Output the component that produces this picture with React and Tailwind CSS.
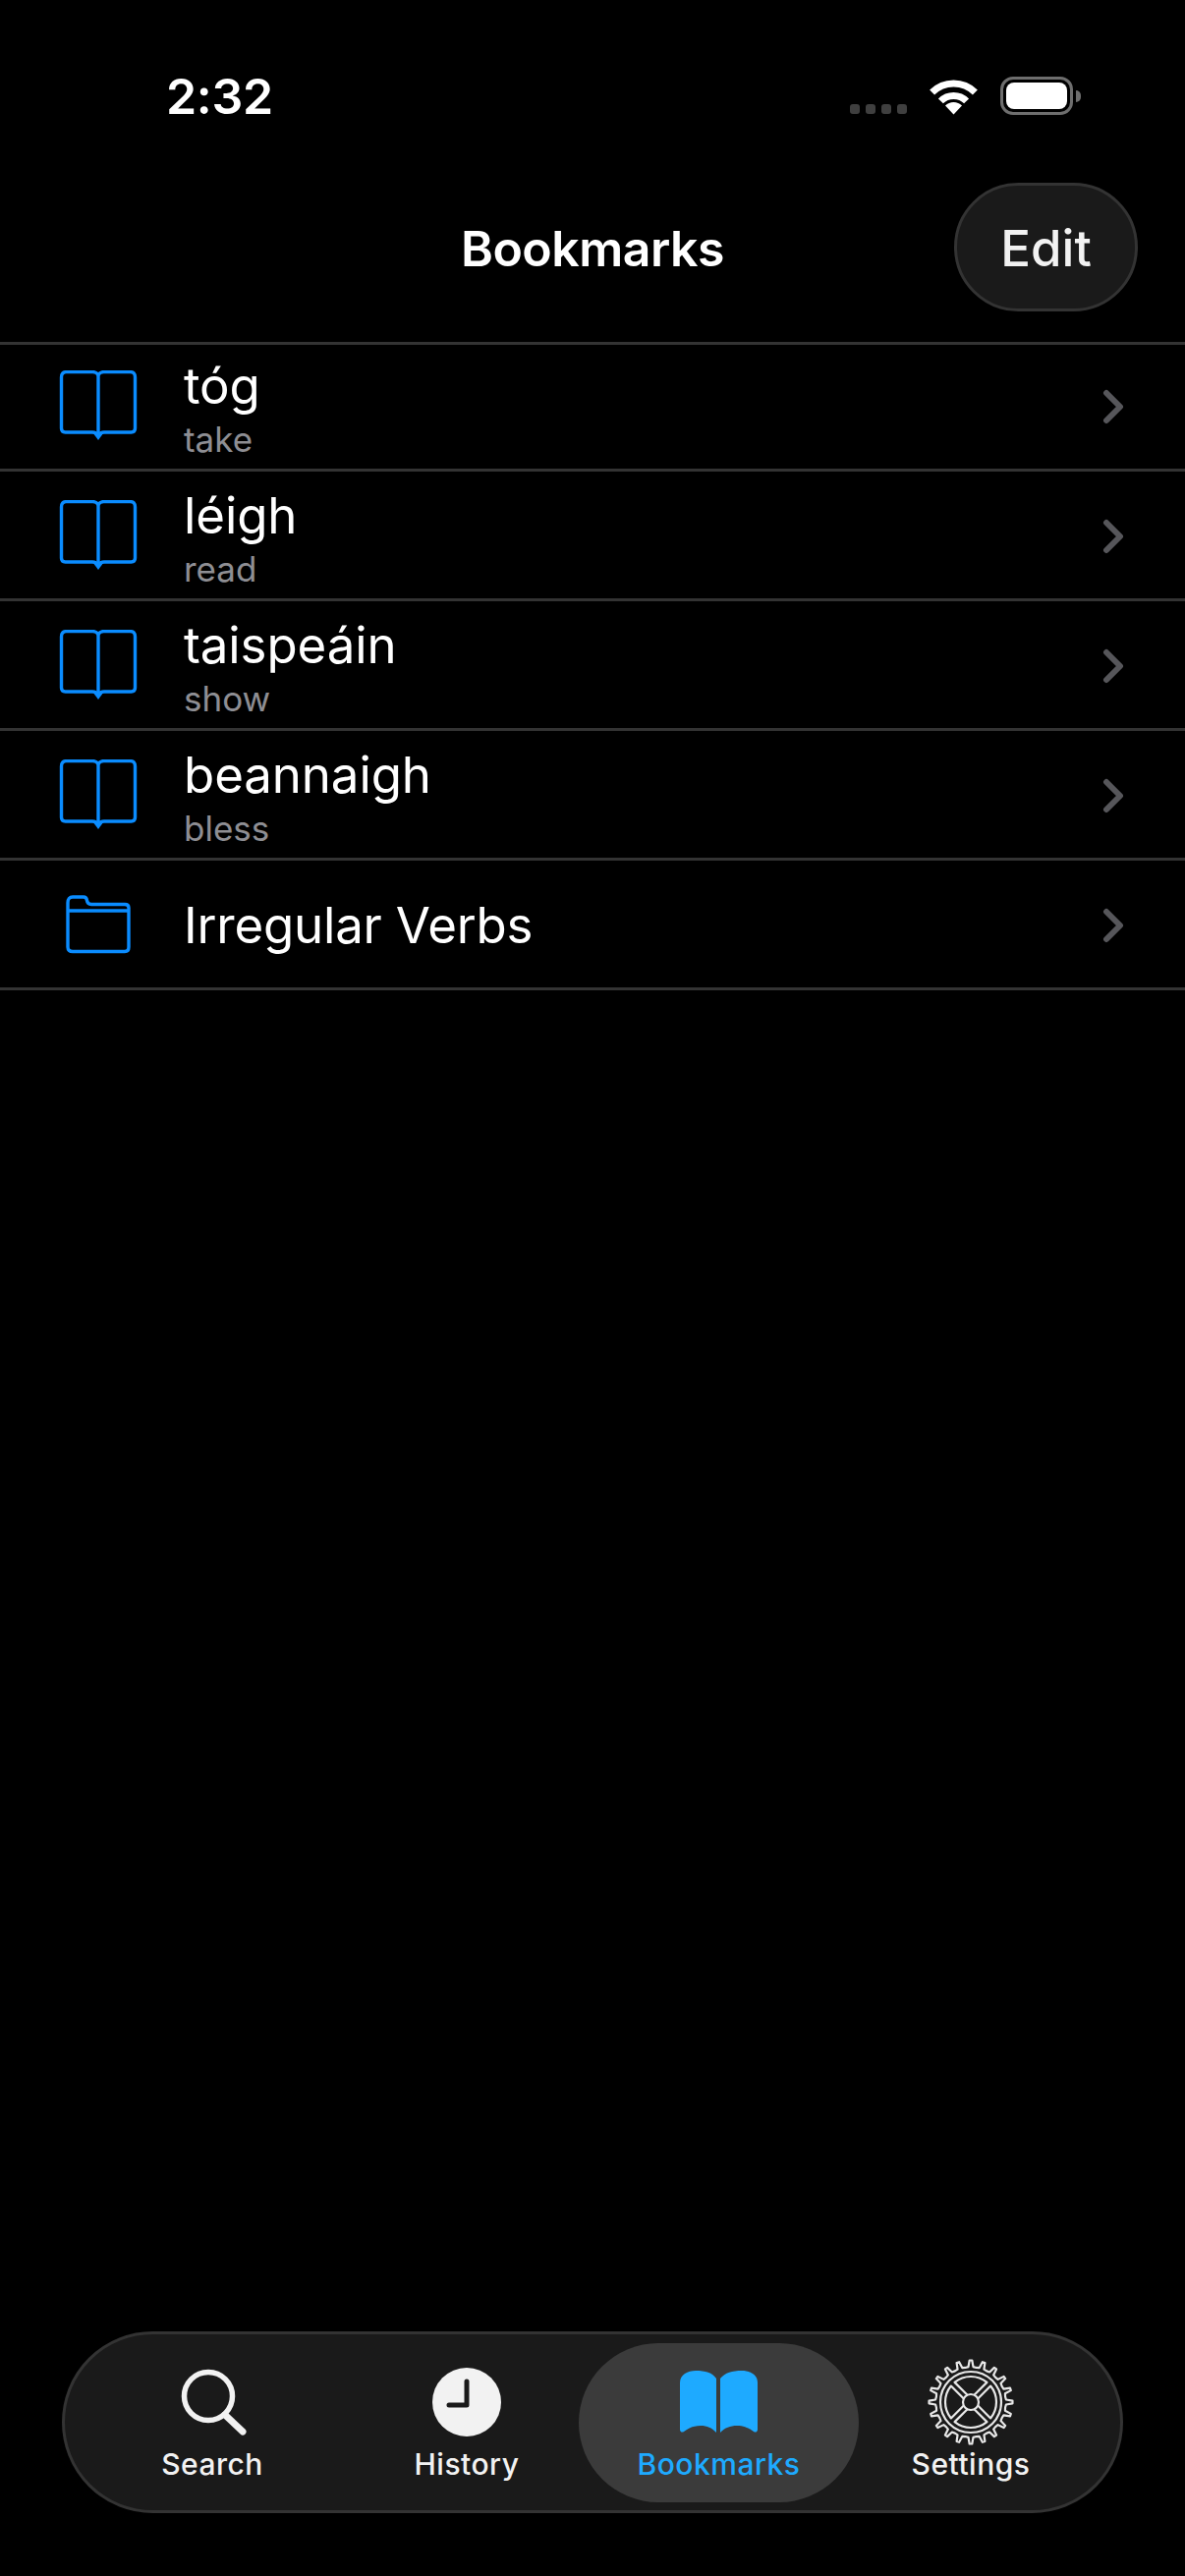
import React from 'react';

const words = [
  { word: 'tóg', meaning: 'take', first: true },
  { word: 'léigh', meaning: 'read' },
  { word: 'taispeáin', meaning: 'show' },
  { word: 'beannaigh', meaning: 'bless' },
];

// points round the settings gear, worked out rather than typed
const polar = (r, deg) => {
  const a = (deg * Math.PI) / 180;
  return `${(44 + r * Math.cos(a)).toFixed(2)} ${(44 + r * Math.sin(a)).toFixed(2)}`;
};

const gearPath = () => {
  const teeth = 20;
  const step = 360 / teeth;
  let d = '';
  for (let i = 0; i < teeth; i++) {
    const a = i * step - 90;
    d += `${i === 0 ? 'M' : 'L'}${polar(35.5, a - step * 0.5)} L${polar(36, a - step * 0.22)} L${polar(42.5, a - step * 0.1)} L${polar(42.5, a + step * 0.1)} L${polar(36, a + step * 0.22)} `;
  }
  return d + 'Z';
};

const sectorPath = (center) => {
  const off = 2.6;
  const inner = 8;
  const outer = 26;
  const ai = (Math.asin(off / inner) * 180) / Math.PI;
  const ao = (Math.asin(off / outer) * 180) / Math.PI;
  const s = center - 45;
  const e = center + 45;
  return `M${polar(inner, s + ai)} L${polar(outer, s + ao)} A${outer} ${outer} 0 0 1 ${polar(outer, e - ao)} L${polar(inner, e - ai)}`;
};

function BookOutline() {
  return (
    <svg width="80" height="72" viewBox="0 0 80 72" fill="none" stroke="#0a8cff" strokeWidth="3.4" strokeLinejoin="round">
      <path d="M40 4.5 Q38 1.6 34.5 1.6 H7.5 Q2.5 1.6 2.5 7 V59 Q2.5 63 6.5 63 H34 Q38 63 40 66 Q42 63 46 63 H73.5 Q77.5 63 77.5 59 V7 Q77.5 1.6 72.5 1.6 H45.5 Q42 1.6 40 4.5 Z" />
      <path d="M40 4.5 V66" />
      <path d="M34.5 63.5 H45.5 L40 71 Z" fill="#0a8cff" stroke="none" />
    </svg>
  );
}

function FolderOutline() {
  return (
    <svg className="mb-[6px]" width="66" height="60" viewBox="0 0 66 60" fill="none" stroke="#0a8cff" strokeWidth="3.4" strokeLinejoin="round">
      <path d="M2 8 Q2 2 7 2 H18 Q21 2 21.5 5.5 Q22 9.5 26 9.5 H60 Q64 9.5 64 13 V53 Q64 57.5 60 57.5 H7 Q2 57.5 2 53 Z" />
      <path d="M2 16 H64" />
    </svg>
  );
}

function Chevron() {
  return (
    <svg width="24" height="40" viewBox="0 0 24 40" fill="none" stroke="#56565a" strokeWidth="6" strokeLinecap="round" strokeLinejoin="round">
      <path d="M4 6 L18 20 L4 34" />
    </svg>
  );
}

function Row({ icon, first, children }) {
  return (
    <div className={`flex items-end border-b-[3px] border-[#333333] pb-[28px] pr-[60px] ${first ? 'h-[129px]' : 'h-[132px]'}`}>
      <div className="w-[187px] pl-[60px]">
        <div className="flex w-[80px] items-end justify-center">{icon}</div>
      </div>
      <div className="flex-1 min-w-0">{children}</div>
      <div className="mb-[15px]"><Chevron /></div>
    </div>
  );
}

function Tab({ width, label, active, children }) {
  return (
    <div className={`flex flex-col items-center h-[162px] ${width} ${active ? 'rounded-full bg-[#3b3b3b]' : ''}`}>
      <div className="flex h-[103px] items-center justify-center pt-[17px]">{children}</div>
      <div className={`text-[30px] leading-[40px] font-medium tracking-[0.5px] ${active ? 'text-[#1eaaff]' : 'text-[#f2f2f2]'}`}>{label}</div>
    </div>
  );
}

export default function App() {
  return (
    <div className="min-h-[2622px] bg-black text-white flex flex-col" style={{ fontFamily: 'Inter, "Noto Sans", sans-serif' }}>
      {/* status bar */}
      <div className="flex h-[186px] items-start pt-[70px] pl-[169px] pr-[106px]">
        <div className="flex-1 text-[50px] leading-[56px] font-semibold tracking-[-0.3px]">2:32</div>
        <div className="flex items-end pt-[8px]">
          <div className="flex gap-[6px] pb-[1px]">
            <div className="h-[10px] w-[10px] rounded-[3px] bg-[#3f3f3f]" />
            <div className="h-[10px] w-[10px] rounded-[3px] bg-[#3f3f3f]" />
            <div className="h-[10px] w-[10px] rounded-[3px] bg-[#3f3f3f]" />
            <div className="h-[10px] w-[10px] rounded-[3px] bg-[#3f3f3f]" />
          </div>
          <svg className="ml-[22px]" width="51" height="37" viewBox="0 0 51 37" fill="none" stroke="#fff" strokeWidth="7">
            <path d="M3.6 14.1 A31 31 0 0 1 47.4 14.1" />
            <path d="M12.4 22.9 A18.5 18.5 0 0 1 38.6 22.9" />
            <path d="M25.5 36.5 L17 27.5 A12 12 0 0 1 34 27.5 Z" fill="#fff" stroke="none" />
          </svg>
          <div className="ml-[22px] flex items-center">
            <div className="flex h-[39px] w-[74px] items-center justify-center rounded-[13px] border-[3px] border-[#6e6e6e]">
              <div className="h-[27px] w-[62px] rounded-[8px] bg-white" />
            </div>
            <div className="ml-[3px] h-[12px] w-[5px] rounded-r-full bg-[#6e6e6e]" />
          </div>
        </div>
      </div>

      {/* nav bar */}
      <div className="grid h-[165px] grid-cols-[1fr_auto_1fr] items-start border-b-[3px] border-[#333333]">
        <div />
        <div className="pt-[32px] text-[50px] leading-[70px] font-semibold tracking-[-0.5px]">Bookmarks</div>
        <div className="flex justify-end pr-[48px]">
          <div className="flex h-[131px] w-[187px] items-center justify-center rounded-full border-[3px] border-[#333333] bg-[#1a1a1a] pt-[3px] text-[51px] font-medium text-[#f2f2f2]">
            Edit
          </div>
        </div>
      </div>

      {/* bookmarks list */}
      <div>
        {words.map((w) => (
          <Row key={w.word} first={w.first} icon={<BookOutline />}>
            <div className="-mb-[18px]">
              <div className="text-[51px] leading-[58px] tracking-[-0.1px] text-white">{w.word}</div>
              <div className="mt-[5px] text-[35px] leading-[40px] text-[#8e8e93]">{w.meaning}</div>
            </div>
          </Row>
        ))}
        <Row icon={<FolderOutline />}>
          <div className="pb-[5px] text-[51px] leading-[60px] tracking-[-0.2px] text-white">Irregular Verbs</div>
        </Row>
      </div>

      <div className="flex-1" />

      {/* tab bar */}
      <div className="mx-[63px] mb-[64px] flex h-[185px] items-center rounded-full border-[3px] border-[#333333] bg-[#1a1a1a]">
        <Tab width="w-[300px]" label="Search">
          <svg width="70" height="70" viewBox="0 0 70 70" fill="none" stroke="#f2f2f2" strokeWidth="5.5" strokeLinecap="round">
            <circle cx="31" cy="29" r="24.5" />
            <path d="M48 48 L66 65" strokeWidth="7" />
          </svg>
        </Tab>
        <Tab width="w-[218px]" label="History">
          <svg width="70" height="70" viewBox="0 0 70 70" fill="none">
            <circle cx="35" cy="35" r="35" fill="#f2f2f2" />
            <path d="M35 14 V38 H17" stroke="#1a1a1a" strokeWidth="5" strokeLinecap="round" strokeLinejoin="round" />
          </svg>
        </Tab>
        <div className="w-[5px]" />
        <Tab width="w-[285px]" label="Bookmarks" active>
          <svg width="79" height="64" viewBox="0 0 79 64" fill="#1eaaff">
            <path d="M0 12 C0 4 8 0 16 0 C26 0 33 2 37 8 V63 C32 58 28 56 21 56 C12 56 7 60 4 62 C2 63.5 0 62 0 60 Z" />
            <path d="M79 12 C79 4 71 0 63 0 C53 0 46 2 41 8 V63 C46 58 51 56 58 56 C67 56 72 60 75 62 C77 63.5 79 62 79 60 Z" />
          </svg>
        </Tab>
        <Tab width="w-[228px]" label="Settings">
          <svg width="88" height="88" viewBox="0 0 88 88" fill="none" stroke="#e8e8e8" strokeWidth="2.2" strokeLinejoin="round">
            <path d={gearPath()} />
            <circle cx="44" cy="44" r="31" />
            <circle cx="44" cy="44" r="8" />
            <path d={sectorPath(-90)} />
            <path d={sectorPath(0)} />
            <path d={sectorPath(90)} />
            <path d={sectorPath(180)} />
          </svg>
        </Tab>
      </div>
    </div>
  );
}
